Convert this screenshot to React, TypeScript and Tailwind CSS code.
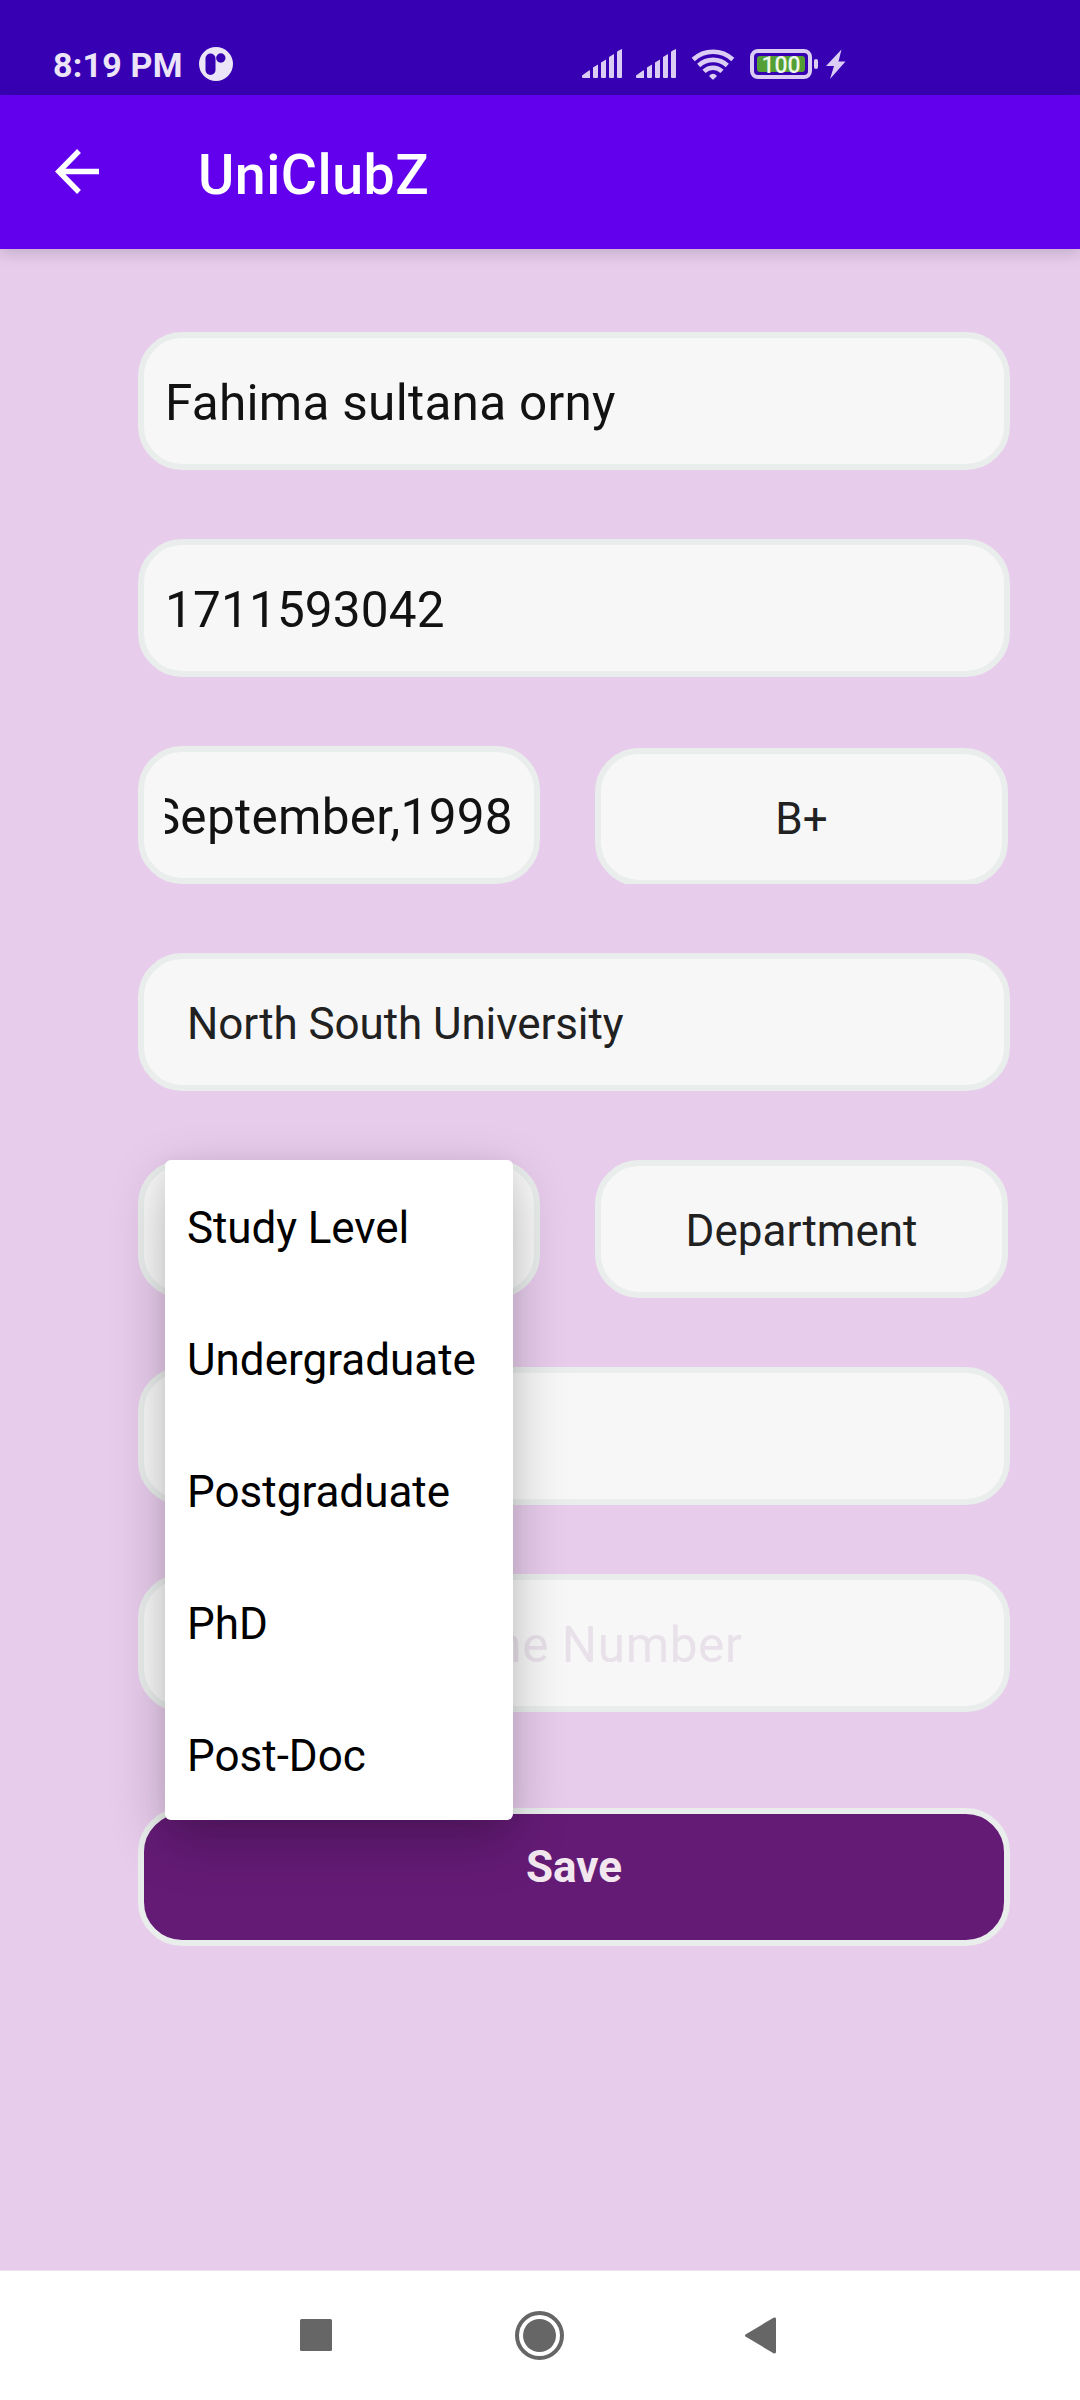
import type { ReactNode } from 'react';

const box = 'rounded-[44px] border-[6px] border-[#e9edec] bg-[#f7f7f7]';

function Field({ children, className = '' }: { children?: ReactNode; className?: string }) {
  return (
    <div className={`flex h-[138px] items-center overflow-hidden whitespace-nowrap px-[21px] pt-[4px] text-[49.5px] text-[#121212] ${box} ${className}`}>
      {children}
    </div>
  );
}

function Signal() {
  return (
    <svg width="40" height="30" viewBox="0 0 40 30" fill="#dccdf5" className="block">
      <path d="M0 26.5L7 21.5Q8 21 8 22V29H1Q0 29 0 28Z" />
      <path d="M11 18.5L16 15.5V28Q16 29 15 29H12Q11 29 11 28Z" />
      <path d="M19 13.5L24 10.5V28Q24 29 23 29H20Q19 29 19 28Z" />
      <path d="M27 8L32 5V28Q32 29 31 29H28Q27 29 27 28Z" />
      <path d="M35 3Q35 2 40 0V28Q40 29 39 29H36Q35 29 35 28Z" />
    </svg>
  );
}

function StatusBar() {
  return (
    <div className="flex h-[95px] items-start bg-[#3700b3] pl-[53px]">
      <div className="mt-[45px] w-[146px] whitespace-nowrap text-[34px] font-bold leading-[40px] tracking-[0.2px] text-[#ebe5f7]">8:19 PM</div>
      <svg width="34" height="34" viewBox="0 0 34 34" className="mt-[47px] block">
        <circle cx="17" cy="17" r="17" fill="#ebe5f7" />
        <rect x="6.500" y="6.500" width="10" height="21.500" rx="5" fill="#3700b3" />
        <circle cx="21.800" cy="11" r="4.700" fill="#3700b3" />
      </svg>
      <div className="ml-[349px] mt-[49px] flex items-start">
        <Signal />
        <div className="ml-[14px]"><Signal /></div>
        <svg width="44" height="32" viewBox="0 0 44 32" className="ml-[15px] block" fill="none" stroke="#dccdf5" strokeWidth="4.600">
          <path d="M2.200 10.500A29 29 0 0 1 41.800 10.500" />
          <path d="M7.700 16.500A21 21 0 0 1 36.300 16.500" />
          <path d="M13 22.300A13 13 0 0 1 31 22.300" />
          <path d="M18 27Q22 22.500 26 27L23 30Q22 31 21 30Z" fill="#dccdf5" stroke="none" />
        </svg>
        <div className="ml-[15px] flex h-[30px] w-[62px] items-center justify-center rounded-[8px] border-[4px] border-[#dccdf5]">
          <div className="flex h-[16px] w-[48px] items-center justify-center rounded-[3px] bg-[#549f35] pt-[3px] text-[23px] font-medium leading-[16px] text-[#eef8ea]">100</div>
        </div>
        <div className="ml-[2px] mt-[10px] h-[10px] w-[4px] rounded-[2px] bg-[#dccdf5]" />
        <svg width="20" height="30" viewBox="0 0 20 30" className="ml-[8px] block">
          <path d="M15.500 0.500L0 17H8L4 30L19.500 12.500H12.500Z" fill="#dccdf5" />
        </svg>
      </div>
    </div>
  );
}

function AppBar() {
  return (
    <div className="relative flex h-[154px] items-center bg-[#6200ee] pl-[55px] shadow-[0_4px_14px_rgba(0,0,0,0.16)]">
      <svg width="45" height="45" viewBox="0 0 45 45" className="-mt-[1px] block" fill="none" stroke="#fff" strokeWidth="5.400">
        <path d="M44 22.500H4M24 2L3.800 22.500L24 43" />
      </svg>
      <h1 className="ml-[98px] mt-[8px] text-[55.5px] font-medium leading-[66px] tracking-[0.5px] text-white">UniClubZ</h1>
    </div>
  );
}

const levels = ['Study Level', 'Undergraduate', 'Postgraduate', 'PhD', 'Post-Doc'];

export default function App() {
  return (
    <div className="flex h-[2400px] w-[1080px] flex-col overflow-hidden bg-[#e7cceb] font-[Roboto,sans-serif]">
      <StatusBar />
      <AppBar />
      <main className="ml-[138px] mt-[83px] flex w-[872px] flex-1 flex-col gap-[69px]">
        <Field className="tracking-[0.27px]">Fahima sultana orny</Field>
        <Field className="tracking-[0.15px]">1711593042</Field>
        <div className="flex h-[138px]">
          <Field className="w-[402px]">
            <div className="flex w-full justify-end overflow-hidden tracking-[0.3px]">September,1998</div>
          </Field>
          <div className="ml-[55px] mt-[2px] h-[136px] w-[413px] overflow-hidden">
            <Field className="justify-center text-[44px]! text-[#212121]!">B+</Field>
          </div>
        </div>
        <Field className="pl-[43px]! text-[44px]! tracking-[-0.09px] text-[#212121]!">North South University</Field>
        <div className="relative flex h-[138px]">
          <Field className="w-[402px]" />
          <Field className="ml-[55px] w-[413px] justify-center text-[44px]! text-[#212121]!">Department</Field>
          <div className="absolute left-[27px] top-0 z-10 w-[348px] rounded-[6px] bg-white shadow-[0_20px_56px_rgba(0,0,0,0.23),0_4px_20px_rgba(0,0,0,0.06)]">
            {levels.map((level) => (
              <div key={level} className="flex h-[132px] items-center whitespace-nowrap pl-[22px] pt-[4px] text-[44px] text-black first:tracking-[-0.1px]">
                {level}
              </div>
            ))}
          </div>
        </div>
        <Field />
        <Field className="justify-center tracking-[0.6px] text-[#e9e1ea]!">Phone Number</Field>
        <button className="mt-[27px] flex h-[138px] items-center justify-center rounded-[44px] border-[6px] border-[#e9edec] bg-[#641b75] pb-[20px] text-[44px] font-bold text-[#f2e7ee]">
          Save
        </button>
      </main>
      <nav className="flex h-[130px] items-center border-t border-[#ece3ee] bg-white">
        <svg width="1080" height="129" viewBox="0 0 1080 129" fill="#666">
          <rect x="300" y="48" width="32" height="32" rx="1.500" />
          <circle cx="539.500" cy="64.500" r="22.500" fill="none" stroke="#666" strokeWidth="4" />
          <circle cx="539.500" cy="64.500" r="16.500" />
          <path d="M745.500 63.500Q744.500 64.500 745.500 65.500L773.500 82.300Q776 83 776 81V48Q776 46 773.500 46.700Z" />
        </svg>
      </nav>
    </div>
  );
}
